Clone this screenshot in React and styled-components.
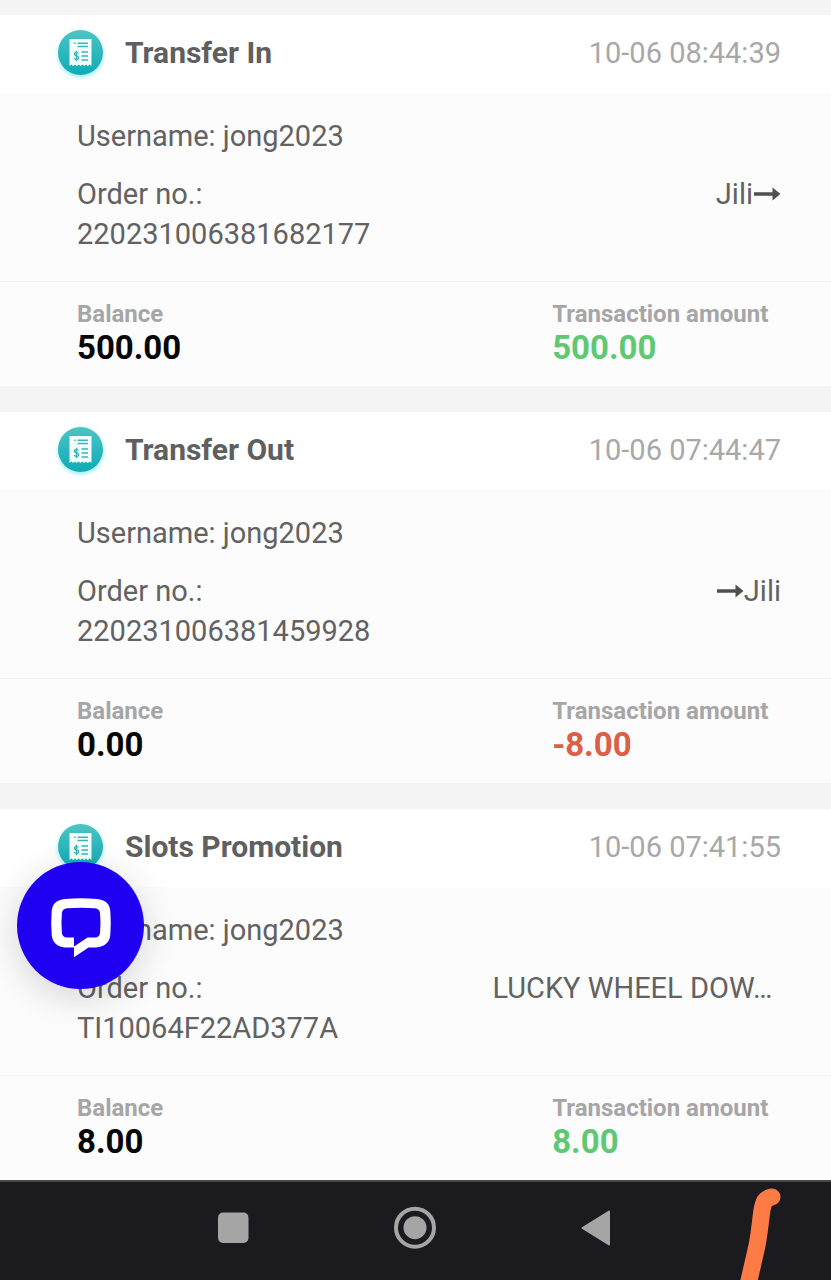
import React from "react";
import styled, { createGlobalStyle } from "styled-components";

const GlobalStyle = createGlobalStyle`
  * {
    box-sizing: border-box;
  }

  body {
    margin: 0;
    background: #f4f4f4;
    font-family: Roboto, "Liberation Sans", sans-serif;
  }
`;

const Page = styled.div`
  display: flex;
  flex-direction: column;
  min-height: 100vh;
`;

const List = styled.main`
  display: flex;
  flex: 1;
  flex-direction: column;
  gap: 26px;
  padding-top: 15px;
`;

const Card = styled.article`
  background: #fcfcfc;
`;

const CardHeader = styled.header`
  display: flex;
  align-items: center;
  height: 78px;
  padding: 0 50px 2px 57px;
  background: #ffffff;
`;

const Title = styled.h2`
  flex: 1;
  margin: 0 0 0 22px;
  font-size: 30px;
  line-height: 40px;
  font-weight: 700;
  color: #5f5f5f;
`;

const Time = styled.time`
  font-size: 29px;
  line-height: 40px;
  color: #a8a8a8;
`;

const CardBody = styled.div`
  padding: 23px 50px 27px 77px;
  font-size: 29px;
  line-height: 40px;
  color: #626262;
`;

const Username = styled.p`
  margin: 0 0 18px;
`;

const OrderRow = styled.div`
  display: flex;
  align-items: flex-start;
  justify-content: space-between;
`;

const Order = styled.p`
  margin: 0;
`;

const OrderLine = styled.span`
  display: block;
`;

const Note = styled.p`
  flex: 0 0 41%;
  margin: 0;
  overflow: hidden;
  text-align: ${({ $long }) => ($long ? "left" : "right")};
  text-overflow: ellipsis;
  white-space: nowrap;
`;

const ArrowIcon = styled.svg`
  width: 28px;
  height: 14px;
  vertical-align: 3px;
  fill: #505050;
`;

const CardFooter = styled.dl`
  display: grid;
  grid-template-columns: 27fr 13fr;
  margin: 0;
  padding: 18px 50px 18px 77px;
  border-top: 1px solid #f3f3f3;
`;

const Label = styled.dt`
  font-size: 24px;
  line-height: 28px;
  font-weight: 700;
  color: #a6a6a6;
  white-space: nowrap;
`;

const colors = {
  plain: "#060606",
  plus: "#5fc873",
  minus: "#dc5f47",
};

const Value = styled.dd`
  margin: 0;
  font-size: 33px;
  line-height: 40px;
  font-weight: 700;
  color: ${({ $tone }) => colors[$tone]};
`;

const Badge = styled.svg`
  width: 46px;
  height: 46px;
  overflow: visible;
  filter: drop-shadow(0 2px 2px rgba(40, 215, 225, 0.5));
`;

const ChatButton = styled.button`
  position: fixed;
  left: 17px;
  bottom: 291px;
  width: 127px;
  height: 127px;
  padding: 0;
  border: 0;
  border-radius: 50%;
  background: #2000f0;
  box-shadow: 0 8px 36px rgba(0, 0, 0, 0.16);
`;

const ChatIcon = styled.svg`
  display: block;
  width: 127px;
  height: 127px;
`;

const NavBar = styled.nav`
  position: relative;
  display: flex;
  justify-content: center;
  gap: 134px;
  padding: 20px 0 26px;
  border-top: 2px solid #484a4a;
  background: #1b1a1f;
`;

const NavButton = styled.button`
  width: 48px;
  height: 52px;
  padding: 0;
  border: 0;
  background: none;
  color: #a5a5a5;
`;

const NavIcon = styled.svg`
  display: block;
  width: 48px;
  height: 52px;
`;

const Scribble = styled.svg`
  position: absolute;
  right: 40px;
  bottom: 0;
  width: 60px;
  height: 98px;
  pointer-events: none;
`;

const Arrow = () => (
  <ArrowIcon viewBox="0 0 28 14" role="img" aria-label="to">
    <path d="M1 5.3h18.500V0.500L27.500 7L19.500 13.500V8.700H1z" />
  </ArrowIcon>
);

const ReceiptBadge = () => (
  <Badge viewBox="0 0 46 46" aria-hidden="true">
    <defs>
      <linearGradient id="badge" x1="0" y1="0" x2="0" y2="1">
        <stop offset="0" stopColor="#4cc4c3" />
        <stop offset="1" stopColor="#0fabb7" />
      </linearGradient>
    </defs>
    <circle cx="23.5" cy="22.5" r="22.5" fill="url(#badge)" />
    <path
      d="M12.500 9h22v27l-1.800-1.500-1.900 1.500-1.800-1.500-1.800 1.500-1.900-1.500-1.800 1.500-1.800-1.500-1.900 1.500-1.800-1.500-1.800 1.500-1.900-1.500-1.800 1.500z"
      fill="#f4ffff"
    />
    <path
      d="M17 13.200h1.500M20.500 13.200h10.500M20.500 16.500h10.500M24.500 22h6.500M24.500 26h6.500M24.500 30h6.500"
      stroke="#3bb5bc"
      strokeWidth="1.5"
      fill="none"
    />
    <path
      d="M21.400 23.400c-.4-1.300-4-1.600-4 .6 0 2.200 4.200 1.300 4.200 3.700 0 2.200-4 2-4.500.4M19.400 20.800v10.400"
      stroke="#3bb5bc"
      strokeWidth="1.4"
      fill="none"
    />
  </Badge>
);

const records = [
  {
    title: "Transfer In",
    time: "10-06 08:44:39",
    order: "220231006381682177",
    note: (
      <>
        Jili
        <Arrow />
      </>
    ),
    balance: "500.00",
    amount: "500.00",
  },
  {
    title: "Transfer Out",
    time: "10-06 07:44:47",
    order: "220231006381459928",
    note: (
      <>
        <Arrow />
        Jili
      </>
    ),
    balance: "0.00",
    amount: "-8.00",
  },
  {
    title: "Slots Promotion",
    time: "10-06 07:41:55",
    order: "TI10064F22AD377A",
    note: "LUCKY WHEEL DOW…",
    long: true,
    balance: "8.00",
    amount: "8.00",
  },
];

const Record = ({ title, time, order, note, long, balance, amount }) => (
  <Card>
    <CardHeader>
      <ReceiptBadge />
      <Title>{title}</Title>
      <Time>{time}</Time>
    </CardHeader>
    <CardBody>
      <Username>Username: jong2023</Username>
      <OrderRow>
        <Order>
          <OrderLine>Order no.:</OrderLine>
          <OrderLine>{order}</OrderLine>
        </Order>
        <Note $long={long}>{note}</Note>
      </OrderRow>
    </CardBody>
    <CardFooter>
      <div>
        <Label>Balance</Label>
        <Value $tone="plain">{balance}</Value>
      </div>
      <div>
        <Label>Transaction amount</Label>
        <Value $tone={amount.startsWith("-") ? "minus" : "plus"}>{amount}</Value>
      </div>
    </CardFooter>
  </Card>
);

const App = () => {
  return (
    <Page>
      <GlobalStyle />
      <List>
        {records.map((record) => (
          <Record key={record.order} {...record} />
        ))}
      </List>
      <ChatButton type="button" aria-label="Open chat">
        <ChatIcon viewBox="0 0 127 127">
          <path
            fillRule="evenodd"
            d="M48 37Q64 35.500 80 37Q92.500 38 93.300 49Q94.300 61 93.300 73Q92 84.500 79 85.400L71.500 85.600L57 95.300V85.600L48 85.400Q36 84.500 34.700 73Q33.700 61 34.700 49Q35.500 38 48 37ZM50 46.300Q45.500 46.700 44.900 51Q44 61 44.900 71Q45.500 75.300 50 75.600H57V84.500L70.500 75.600H78Q82.500 75.300 83 71Q84 61 83 51Q82.500 46.700 78 46.300Q64 45.300 50 46.300Z"
            fill="#ffffff"
          />
        </ChatIcon>
      </ChatButton>
      <NavBar>
        <NavButton type="button" aria-label="Recent apps">
          <NavIcon viewBox="0 0 48 52">
            <rect x="8" y="10.500" width="30.500" height="30.500" rx="5" fill="currentColor" />
          </NavIcon>
        </NavButton>
        <NavButton type="button" aria-label="Home">
          <NavIcon viewBox="0 0 48 52">
            <circle cx="23" cy="25.700" r="19" fill="none" stroke="currentColor" strokeWidth="4" />
            <circle cx="23" cy="25.700" r="11.500" fill="currentColor" />
          </NavIcon>
        </NavButton>
        <NavButton type="button" aria-label="Back">
          <NavIcon viewBox="0 0 48 52">
            <path
              d="M8.500 26L35 9.500V42.500z"
              fill="currentColor"
              stroke="currentColor"
              strokeWidth="2"
              strokeLinejoin="round"
            />
          </NavIcon>
        </NavButton>
        <Scribble viewBox="0 0 60 98" aria-hidden="true">
          <path
            d="M41 15C34 16 32.500 20 31 28C29 42 28 56 25 68L17 103"
            fill="none"
            stroke="#ff7b45"
            strokeWidth="17"
            strokeLinecap="round"
          />
        </Scribble>
      </NavBar>
    </Page>
  );
};

export default App;
